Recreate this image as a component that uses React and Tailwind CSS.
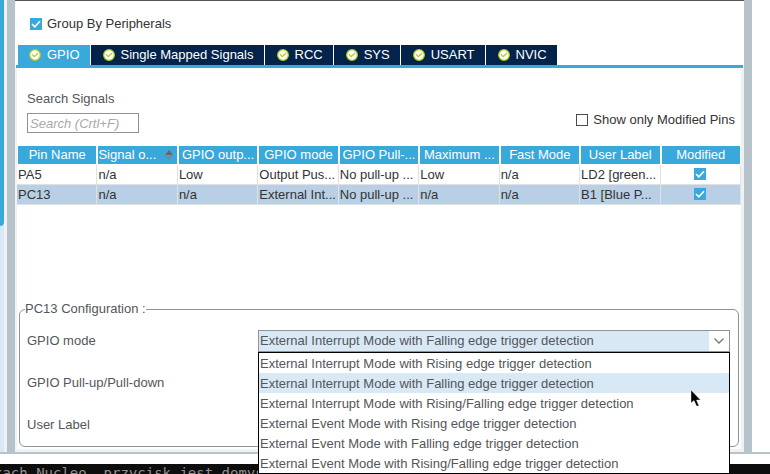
import React from 'react';

const tabs = [
  { name: 'GPIO', active: true },
  { name: 'Single Mapped Signals' },
  { name: 'RCC' },
  { name: 'SYS' },
  { name: 'USART' },
  { name: 'NVIC' },
];

const columns = [
  'Pin Name',
  'Signal o...',
  'GPIO outp...',
  'GPIO mode',
  'GPIO Pull-...',
  'Maximum ...',
  'Fast Mode',
  'User Label',
  'Modified',
];

const pins = [
  ['PA5', 'n/a', 'Low', 'Output Pus...', 'No pull-up ...', 'Low', 'n/a', 'LD2 [green...'],
  ['PC13', 'n/a', 'n/a', 'External Int...', 'No pull-up ...', 'n/a', 'n/a', 'B1 [Blue P...'],
];

const modes = [
  'External Interrupt Mode with Rising edge trigger detection',
  'External Interrupt Mode with Falling edge trigger detection',
  'External Interrupt Mode with Rising/Falling edge trigger detection',
  'External Event Mode with Rising edge trigger detection',
  'External Event Mode with Falling edge trigger detection',
  'External Event Mode with Rising/Falling edge trigger detection',
];

function Tick({ id, label, checked }) {
  return (
    <span className="relative inline-block size-3 shrink-0">
      <input
        id={id}
        type="checkbox"
        aria-label={label}
        defaultChecked={checked}
        className="peer block size-3 appearance-none border border-[#4d4d4d] bg-white checked:border-[#39a9dc] checked:bg-[#39a9dc]"
      />
      <svg
        viewBox="0 0 12 12"
        className="pointer-events-none absolute inset-0 hidden size-3 peer-checked:block"
        fill="none"
        stroke="white"
        strokeWidth="1.6"
      >
        <path d="M2 6 4.800 8.800 10 3.200" />
      </svg>
    </span>
  );
}

function StatusIcon() {
  return (
    <svg viewBox="0 0 12 12" className="size-3 shrink-0" fill="none">
      <circle cx="6" cy="6" r="5.3" fill="white" stroke="#b5cc18" strokeWidth="1.3" />
      <path d="M3 5.4 5.3 7.700 9 4" stroke="#b5cc18" strokeWidth="1.3" />
    </svg>
  );
}

function Cursor() {
  return (
    <svg viewBox="0 0 10 17" className="pointer-events-none absolute top-9 right-7 h-[17px] w-2.5">
      <path d="M0 1V14L3 11.500 5.500 17H8L5.500 11H9.500Z" fill="black" stroke="white" strokeWidth="0.4" />
    </svg>
  );
}

function PinTable() {
  return (
    <table className="w-full table-fixed border-separate border-spacing-0 text-left leading-[18px] text-[#333]">
      <thead>
        <tr>
          {columns.map((name, i) => (
            <th key={name} className="h-[19px] border-x border-b border-white bg-[#39a9dc] p-0 font-normal text-white">
              {i === 1 ? (
                <div className="flex items-center justify-between pr-1">
                  <span className="whitespace-nowrap">{name}</span>
                  <svg viewBox="0 0 8 11" className="h-[11px] w-2">
                    <path d="M0 5 4 0 8 5Z" fill="#666" />
                    <path d="M0 6 4 11 8 6Z" fill="#5b93b5" />
                  </svg>
                </div>
              ) : (
                <div className="text-center whitespace-nowrap">{name}</div>
              )}
            </th>
          ))}
        </tr>
      </thead>
      <tbody>
        {pins.map((pin, row) => (
          <tr key={pin[0]} className={row === 1 ? 'bg-[#b8cfe5]' : 'bg-white'}>
            {pin.map((value, i) => (
              <td key={i} className="h-5 border-r border-b border-[#dfe1e3] p-0 pl-px leading-[19px] whitespace-nowrap">
                {value}
              </td>
            ))}
            <td className="h-5 border-r border-b border-[#dfe1e3] p-0 align-top">
              <div className="flex h-[18px] items-center justify-center">
                <Tick label={`${pin[0]} modified`} checked />
              </div>
            </td>
          </tr>
        ))}
      </tbody>
    </table>
  );
}

function ModeSelect() {
  return (
    <div className="relative">
      <div className="relative border border-[#8d959b]">
        <select
          id="mode"
          defaultValue={modes[1]}
          className="block h-5 w-full appearance-none bg-[#d9e8f5] pl-px outline-none"
        >
          {modes.map((mode) => (
            <option key={mode}>{mode}</option>
          ))}
        </select>
        <span className="pointer-events-none absolute inset-y-0 right-0 flex w-5 items-center justify-center bg-white">
          <svg viewBox="0 0 10 6" className="h-1.5 w-2.5" fill="none" stroke="#777" strokeWidth="1.3">
            <path d="M0.500 0.500 5 5 9.500 0.500" />
          </svg>
        </span>
      </div>
      <ul role="listbox" aria-label="GPIO mode" className="absolute inset-x-0 top-full z-10 border border-black bg-white">
        {modes.map((mode, i) => (
          <li
            key={mode}
            role="option"
            aria-selected={i === 1}
            className={`h-5 pl-px leading-[21px] whitespace-nowrap ${i === 1 ? 'bg-[#d9e8f5]' : ''}`}
          >
            {mode}
          </li>
        ))}
        <Cursor />
      </ul>
    </div>
  );
}

export default function App() {
  return (
    <div className="flex h-screen flex-col overflow-hidden bg-white font-['Liberation_Sans',Arial,sans-serif] text-[13px] text-[#53565a]">
      <div className="flex min-h-0 flex-1 border-b-2 border-[#b7c3ca]">
        <aside className="w-[7px] shrink-0 bg-[#f0f1f2] pr-[3px]">
          <div className="flex h-full flex-col bg-[#d9e8f5]">
            <div className="h-1/2 rounded-br bg-[#39a9dc]" />
          </div>
        </aside>
        <div className="w-2 shrink-0 bg-[#b7c3ca]" />

        <main className="flex min-w-0 flex-1 flex-col border-t border-[#555]">
          <div className="flex items-center gap-[5px] px-[15px] pt-3.5 pb-3 leading-[18px] text-[#333]">
            <Tick id="group" checked />
            <label htmlFor="group">Group By Peripherals</label>
          </div>

          <nav className="mx-px flex gap-px border-b-[3px] border-[#39a9dc] pl-0.5" role="tablist">
            {tabs.map((tab) => (
              <button
                key={tab.name}
                role="tab"
                aria-selected={!!tab.active}
                className={`flex h-5 items-center gap-1.5 pr-2.5 text-white ${
                  tab.active ? 'bg-[#39a9dc] pl-[11px]' : 'bg-[#03234b] pl-3'
                }`}
              >
                <StatusIcon />
                {tab.name}
              </button>
            ))}
          </nav>

          <section className="flex min-h-0 flex-1 flex-col border-r-[3px] border-b-[3px] border-l-2 border-[#f0f1f2]">
            <div className="flex items-end justify-between pt-[22px] pr-1.5 pb-[13px] pl-2.5">
              <div className="flex flex-col gap-1.5">
                <label htmlFor="search" className="leading-[17px]">
                  Search Signals
                </label>
                <input
                  id="search"
                  placeholder="Search (Crtl+F)"
                  className="h-5 w-28 border border-[#8d959b] px-0.5 italic outline-none placeholder:text-[#a9a9a9]"
                />
              </div>
              <div className="flex items-center gap-[5px] pb-1 leading-[18px] text-[#333]">
                <Tick id="modified" />
                <label htmlFor="modified">Show only Modified Pins</label>
              </div>
            </div>

            <PinTable />

            <fieldset className="mx-0.5 mt-auto mb-0.5 min-w-0 rounded-md border border-[#8d959b] px-[7px] pb-2.5">
              <legend className="-ml-0.5 leading-[18px]">PC13 Configuration :</legend>
              <div className="grid grid-cols-[231px_1fr] items-center gap-y-5 pt-3 pr-px">
                <label htmlFor="mode">GPIO mode</label>
                <ModeSelect />
                <span className="col-span-2 leading-[22px]">GPIO Pull-up/Pull-down</span>
                <span className="col-span-2 leading-[22px]">User Label</span>
              </div>
            </fieldset>
          </section>
        </main>

        <div className="w-2 shrink-0 bg-[#b7c3ca]" />
        <div className="w-[18px] shrink-0" />
      </div>

      <footer className="mt-2.5 h-2.5 shrink-0 overflow-hidden bg-[#0d0d0d]">
        <p className="-ml-1.5 font-['DejaVu_Sans_Mono',monospace] text-sm leading-[18px] whitespace-nowrap text-[#8f8f8f]">
          kach Nucleo, przycisk jest domyślnie
        </p>
      </footer>
    </div>
  );
}
